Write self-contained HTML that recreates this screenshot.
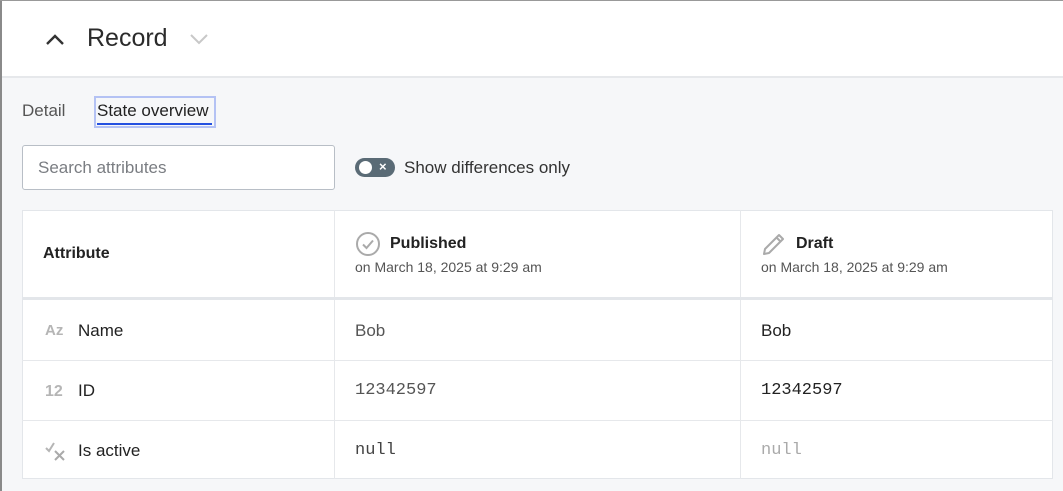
<!DOCTYPE html>
<html><head><meta charset="utf-8"><style>
*{box-sizing:border-box;margin:0;padding:0}
body{width:1063px;height:491px;overflow:hidden;background:#f6f7f9;font-family:"Liberation Sans",sans-serif;color:#222;position:relative}
.a{position:absolute;white-space:nowrap}
.mono{font-family:"Liberation Mono",monospace}
</style></head><body>
<div class="a" style="left:0;top:0;width:2px;height:491px;background:#8a8a8a"></div>
<div class="a" style="left:0;top:0;width:1063px;height:1px;background:#999"></div>
<div class="a" style="left:2px;top:1px;width:1061px;height:77px;background:#fff;border-bottom:2px solid #e6e8eb"></div>
<svg class="a" style="left:44px;top:31px" width="22" height="16" viewBox="0 0 22 16"><path d="M3 13 L11 5 L19 13" fill="none" stroke="#333" stroke-width="2.4"/></svg>
<div class="a" style="left:87px;top:24px;font-size:25px;color:#2b2b2b">Record</div>
<svg class="a" style="left:188px;top:32px" width="22" height="14" viewBox="0 0 22 14"><path d="M3 3 L11 11 L19 3" fill="none" stroke="#c8c8c8" stroke-width="2"/></svg>

<div class="a" style="left:22px;top:101px;font-size:17px;color:#555">Detail</div>
<div class="a" style="left:94px;top:96px;width:122px;height:32px;border:2px solid #b4c2f4"></div>
<div class="a" style="left:97px;top:101px;font-size:17px;color:#222">State overview</div>
<div class="a" style="left:97px;top:123px;width:115px;height:2px;background:#2450e0"></div>

<div class="a" style="left:22px;top:145px;width:313px;height:45px;border:1px solid #b8bec6;border-radius:3px;background:#fff"></div>
<div class="a" style="left:38px;top:158px;font-size:17px;color:#7a7d82">Search attributes</div>
<div class="a" style="left:355px;top:158px;width:40px;height:19px;border-radius:10px;background:#5a6b76"></div>
<div class="a" style="left:359px;top:161px;width:13px;height:13px;border-radius:50%;background:#fff"></div>
<div class="a" style="left:379px;top:159px;font-size:13px;color:#fff;font-weight:bold">×</div>
<div class="a" style="left:404px;top:158px;font-size:17px;color:#333">Show differences only</div>

<div class="a" style="left:22px;top:210px;width:1031px;height:269px;background:#fff;border:1px solid #e3e6ea"></div>
<div class="a" style="left:334px;top:210px;width:1px;height:269px;background:#e6e8eb"></div>
<div class="a" style="left:740px;top:210px;width:1px;height:269px;background:#e6e8eb"></div>
<div class="a" style="left:22px;top:297px;width:1031px;height:3px;background:#e3e6ea"></div>
<div class="a" style="left:22px;top:360px;width:1031px;height:1px;background:#e6e8eb"></div>
<div class="a" style="left:22px;top:420px;width:1031px;height:1px;background:#e6e8eb"></div>

<div class="a" style="left:43px;top:245px;font-size:16px;font-weight:bold;color:#222">Attribute</div>
<svg class="a" style="left:355px;top:231px" width="26" height="26" viewBox="0 0 26 26"><circle cx="13" cy="13" r="11" fill="none" stroke="#aaa" stroke-width="2"/><path d="M8 13.5 L11.5 17 L18 9.5" fill="none" stroke="#aaa" stroke-width="2"/></svg>
<div class="a" style="left:390px;top:235px;font-size:16px;font-weight:bold;color:#222">Published</div>
<div class="a" style="left:355px;top:259px;font-size:14px;color:#555">on March 18, 2025 at 9:29 am</div>
<svg class="a" style="left:761px;top:231px" width="26" height="26" viewBox="0 0 26 26"><path d="M3 23 L4 18 L18 4 L22 8 L8 22 Z M15.5 6.5 L19.5 10.5" fill="none" stroke="#aaa" stroke-width="2" stroke-linejoin="round"/></svg>
<div class="a" style="left:796px;top:235px;font-size:16px;font-weight:bold;color:#222">Draft</div>
<div class="a" style="left:761px;top:259px;font-size:14px;color:#555">on March 18, 2025 at 9:29 am</div>

<div class="a" style="left:45px;top:322px;font-size:15px;font-weight:bold;color:#b5b5b5">Az</div>
<div class="a" style="left:78px;top:321px;font-size:17px;color:#222">Name</div>
<div class="a" style="left:355px;top:321px;font-size:17px;color:#555">Bob</div>
<div class="a" style="left:761px;top:321px;font-size:17px;color:#222">Bob</div>

<div class="a" style="left:45px;top:383px;font-size:16px;font-weight:bold;color:#b5b5b5">12</div>
<div class="a" style="left:78px;top:381px;font-size:17px;color:#222">ID</div>
<div class="a mono" style="left:355px;top:381px;font-size:17px;color:#555">12342597</div>
<div class="a mono" style="left:761px;top:381px;font-size:17px;color:#222">12342597</div>

<svg class="a" style="left:44px;top:440px" width="24" height="22" viewBox="0 0 24 22"><path d="M2 8 L5 11 L10 3" fill="none" stroke="#b5b5b5" stroke-width="2"/><path d="M11 11 L20 20 M20 11 L11 20" fill="none" stroke="#aaa" stroke-width="2"/></svg>
<div class="a" style="left:78px;top:441px;font-size:17px;color:#222">Is active</div>
<div class="a mono" style="left:355px;top:441px;font-size:17px;color:#444">null</div>
<div class="a mono" style="left:761px;top:441px;font-size:17px;color:#aaa">null</div>
</body></html>
